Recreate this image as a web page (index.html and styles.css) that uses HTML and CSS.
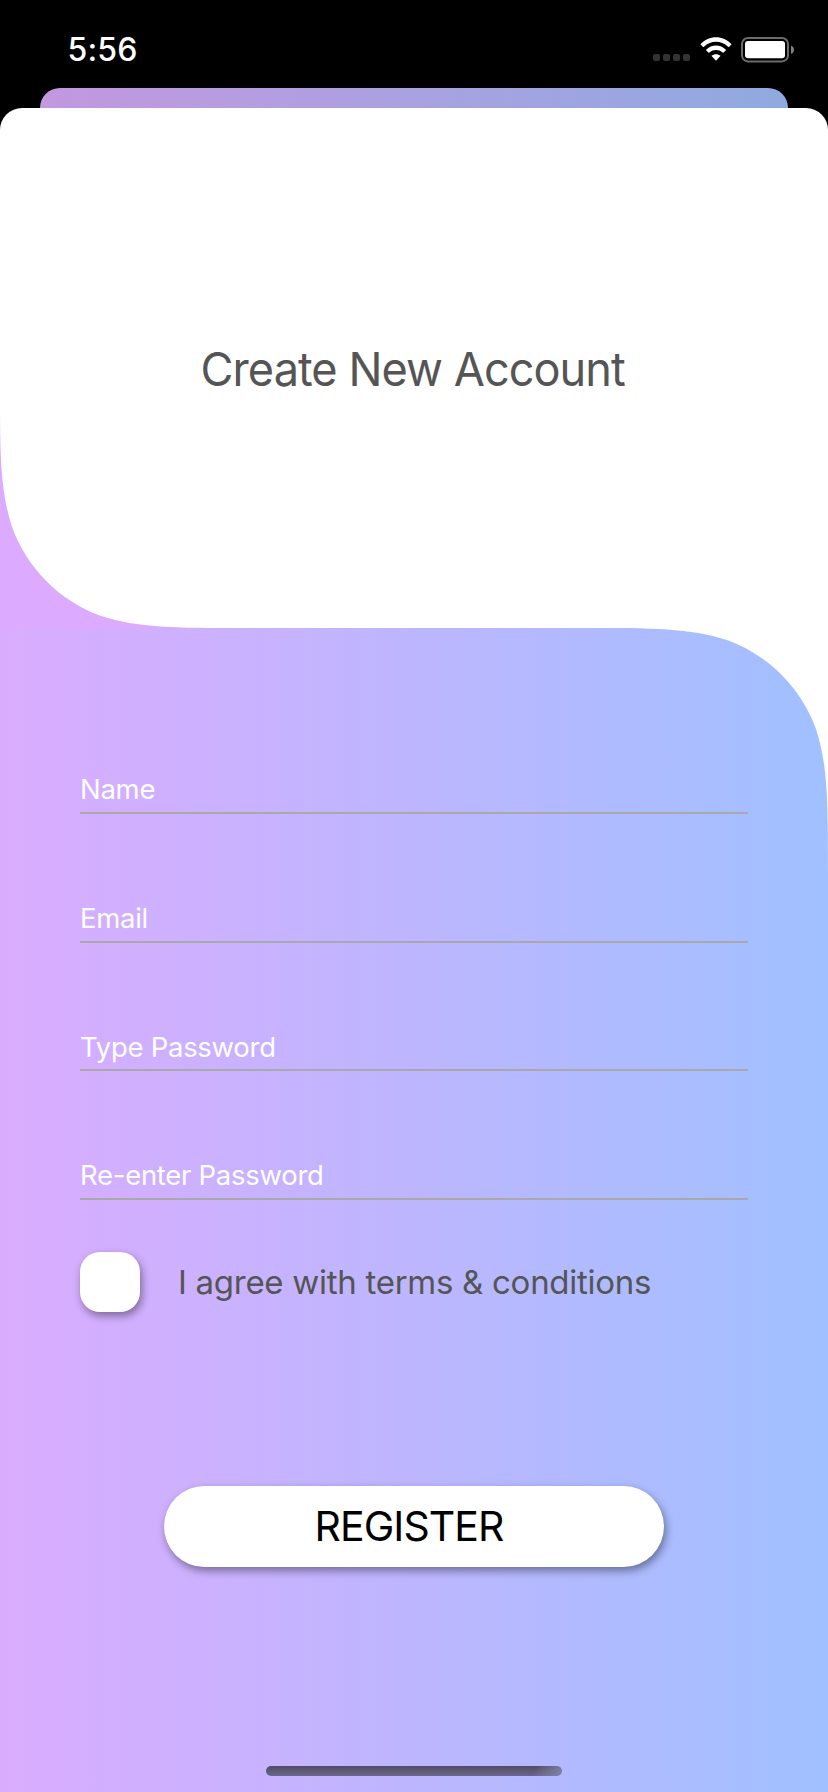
FILE: index.html
```
<!DOCTYPE html>
<html lang="en">
<head>
<meta charset="utf-8">
<title>Create New Account</title>
<link rel="stylesheet" href="styles.css">
</head>
<body>
<div class="phone">
  <header class="status">
    <span class="time">5:56</span>
    <div class="indicators">
      <div class="signal"><i></i><i></i><i></i><i></i></div>
      <svg class="wifi" width="32" height="24" viewBox="0 0 32 24">
        <path d="M0.400 7.300C9-2.100 23-2.100 31.600 7.300L29.200 9.800Q28.700 10.300 28.100 9.800C21 3.200 11 3.200 3.900 9.800Q3.300 10.300 2.800 9.800Z"/>
        <path d="M5.900 12.900C11.800 7.100 20.200 7.100 26.100 12.900L23.700 15.500Q23.200 15.900 22.700 15.500C18.700 12.200 13.300 12.200 9.300 15.500Q8.800 15.900 8.300 15.500Z"/>
        <path d="M11.400 18.800C14.100 16.600 17.900 16.600 20.600 18.800L16 23.700Z"/>
      </svg>
      <svg class="battery" width="54" height="26" viewBox="0 0 54 26">
        <rect x="1" y="1" width="46" height="23.400" rx="6" fill="none" stroke="#6b6b6b" stroke-width="2"/>
        <rect x="4" y="4" width="40" height="17.200" rx="3" fill="#fff"/>
        <path d="M50 8.500C54 10 54 15.400 50 17Z" fill="#808080"/>
      </svg>
    </div>
  </header>
  <div class="back-card"></div>
  <main class="sheet">
    <div class="hero">
      <svg class="hero-corner" width="245" height="245" viewBox="0 0 245 245">
        <path d="M0 0.400C0 70.800 0 106 12 144C27 185.300 59.700 218 101 233C139 245 174.200 245 244.600 245H0Z"/>
      </svg>
      <h1>Create New Account</h1>
    </div>
    <form class="panel">
      <svg class="panel-corner" width="245" height="245" viewBox="0 0 245 245">
        <path d="M0.400 0C70.800 0 106 0 144 12C185.300 27 218 59.700 233 101C245 139 245 174.200 245 244.600V0Z"/>
      </svg>
      <div class="fields">
        <label class="field">Name</label>
        <label class="field">Email</label>
        <label class="field">Type Password</label>
        <label class="field">Re-enter Password</label>
      </div>
      <div class="agree"><span class="checkbox"></span><span class="terms">I agree with terms &amp; conditions</span></div>
      <button class="register" type="button"><span>REGISTER</span></button>
      <div class="home"></div>
    </form>
  </main>
</div>
</body>
</html>
```
FILE: styles.css
```
* { box-sizing: border-box; }
body {
  margin: 0;
  background: #000;
  font-family: Inter, "Liberation Sans", sans-serif;
}
.phone {
  width: 828px;
  height: 1792px;
  overflow: hidden;
  display: flex;
  flex-direction: column;
  background: #000;
}
.status {
  height: 88px;
  flex: none;
  display: flex;
  justify-content: space-between;
  padding: 0 33px 0 67.500px;
}
.time {
  height: 100px;
  line-height: 100px;
  color: #fff;
  font-size: 32px;
  font-weight: 500;
  letter-spacing: 0.150px;
}
.indicators { display: flex; align-items: flex-start; padding-top: 37px; }
.signal { display: flex; gap: 3px; padding-top: 17px; margin-right: 10px; }
.signal i { width: 7px; height: 7px; border-radius: 2px; background: #333; }
.wifi { fill: #fff; margin-right: 9px; }
.back-card {
  height: 20px;
  flex: none;
  margin: 0 40px;
  border-radius: 20px 20px 0 0;
  background: linear-gradient(90deg, #c398e0, #8faae0);
}
.sheet {
  flex: 1;
  display: flex;
  flex-direction: column;
  border-radius: 22px 22px 0 0;
  background: #fff;
  overflow: hidden;
}
.hero {
  position: relative;
  height: 520px;
  flex: none;
  display: flex;
  justify-content: center;
}
.hero-corner { position: absolute; left: 0; bottom: 0; fill: #dcabff; }
h1 {
  margin: 0 2px 0 0;
  height: 522px;
  line-height: 523px;
  font-size: 46.500px;
  font-weight: 400;
  letter-spacing: -0.980px;
  transform: scaleX(0.97);
  color: #555;
  white-space: nowrap;
}
.panel {
  position: relative;
  flex: 1;
  display: flex;
  flex-direction: column;
  padding: 57.300px 80px 0;
  background: linear-gradient(90deg, #daacff, #a0c0ff);
}
.panel-corner { position: absolute; right: 0; top: 0; fill: #fff; }
.fields { display: flex; flex-direction: column; }
.field {
  display: block;
  height: 128.670px;
  padding-top: 90px;
  line-height: 29px;
  font-size: 27.500px;
  letter-spacing: -0.280px;
  color: #fff;
  border-bottom: 2px solid #a9a9a9;
}
.agree { display: flex; align-items: center; height: 60px; margin-top: 52px; }
.checkbox {
  width: 60px;
  height: 60px;
  border-radius: 20px;
  background: #fff;
  box-shadow: 2px 4px 8px rgba(0, 0, 0, 0.4);
}
.terms {
  margin-left: 38px;
  font-size: 33px;
  line-height: 60px;
  letter-spacing: -0.280px;
  color: #555;
  white-space: nowrap;
}
.register {
  width: 500px;
  height: 81px;
  margin: 174px 0 0 84px;
  padding: 0 10px 0 0;
  border: 0;
  border-radius: 40.500px;
  background: #fff;
  color: #000;
  font-family: inherit;
  font-size: 41px;
  line-height: 81px;
  letter-spacing: -0.950px;
  box-shadow: 2px 4px 8px rgba(0, 0, 0, 0.4);
}
.home {
  width: 296px;
  height: 10px;
  margin: 199px 0 0 186px;
  border-radius: 5px;
  background:
    linear-gradient(115deg, rgba(128, 128, 170, 0) 90%, #7f83aa 100%),
    linear-gradient(#514c64, #6b658a);
}
```
